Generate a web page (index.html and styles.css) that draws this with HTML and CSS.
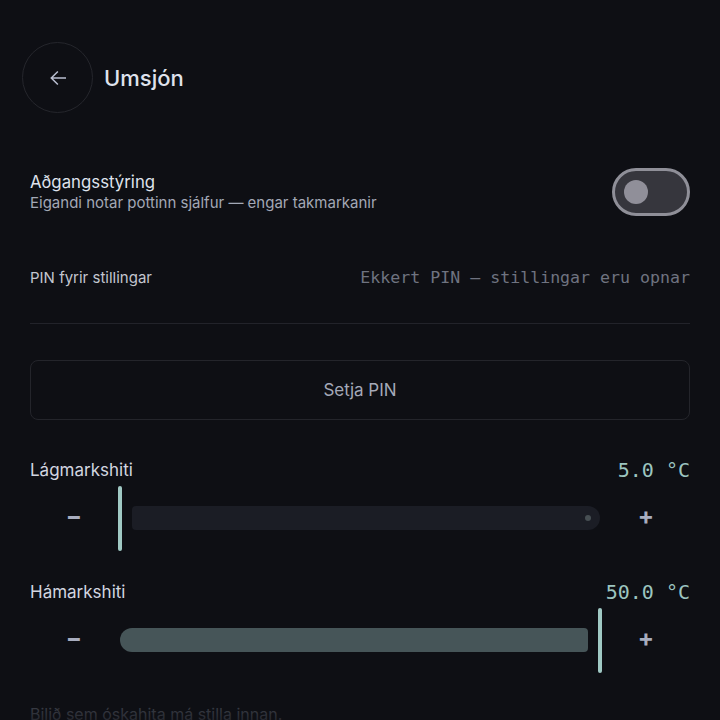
FILE: index.html
```html
<!DOCTYPE html>
<html lang="is">

<head>
  <meta charset="UTF-8">
  <meta name="viewport" content="width=device-width, initial-scale=1.0">
  <title>Umsjón</title>
  <link rel="stylesheet" href="styles.css">
</head>

<body>
  <header class="top-bar">
    <button type="button" class="back-btn" aria-label="Til baka">
      <svg viewBox="0 0 24 24" width="24" height="24">
        <path d="M20 11.25H7.1l5.3-5.3-1.06-1.06L4.2 12l7.14 7.11 1.06-1.06-5.3-5.3H20z" fill="currentColor" />
      </svg>
    </button>
    <h1 class="title">Umsjón</h1>
  </header>

  <main class="content">
    <div class="row toggle-row">
      <div class="row-text">
        <p class="row-title">Aðgangsstýring</p>
        <p class="row-sub">Eigandi notar pottinn sjálfur — engar takmarkanir</p>
      </div>
      <span class="switch"><span class="switch-thumb"></span></span>
    </div>

    <div class="row pin-row">
      <p class="pin-label">PIN fyrir stillingar</p>
      <p class="pin-value">Ekkert PIN — stillingar eru opnar</p>
    </div>

    <hr class="divider">

    <button type="button" class="outline-btn">Setja PIN</button>

    <section class="range">
      <div class="range-head">
        <p class="range-label">Lágmarkshiti</p>
        <p class="range-value">5.0 °C</p>
      </div>
      <div class="slider-row">
        <button type="button" class="step-btn">−</button>
        <div class="slider slider-min">
          <span class="handle"></span>
          <span class="track-off"><span class="stop"></span></span>
        </div>
        <button type="button" class="step-btn">+</button>
      </div>
    </section>

    <section class="range">
      <div class="range-head">
        <p class="range-label">Hámarkshiti</p>
        <p class="range-value">50.0 °C</p>
      </div>
      <div class="slider-row">
        <button type="button" class="step-btn">−</button>
        <div class="slider slider-max">
          <span class="track-on"></span>
          <span class="handle"></span>
        </div>
        <button type="button" class="step-btn">+</button>
      </div>
    </section>

    <p class="hint">Bilið sem óskahita má stilla innan.</p>
  </main>

  <div class="fade"></div>
</body>

</html>
```

FILE: styles.css
```css
* {
  margin: 0;
  padding: 0;
  box-sizing: border-box;

  font-family: Inter, "Noto Sans", sans-serif;
}

body {
  width: 720px;
  height: 720px;
  overflow: hidden;
  background-color: #0e0f14;
  color: #dfe2ec;
}

.top-bar {
  display: flex;
  align-items: center;
  gap: 11px;

  padding: 42px 0 0 22px;
}

.back-btn {
  display: flex;
  align-items: center;
  justify-content: center;

  width: 71px;
  height: 71px;
  border-radius: 50%;
  border: 1.5px solid #25262c;
  background: none;
  color: #b9bed0;
}

.title {
  font-size: 22px;
  font-weight: 500;
  color: #dfe2ec;
}

.content {
  padding: 0 30px;
}

.row {
  display: flex;
  align-items: center;
  justify-content: space-between;
}

.toggle-row {
  margin-top: 55px;
}

.row-title {
  font-size: 16.8px;
  line-height: 22px;
  color: #dfe2ec;
}

.row-sub {
  font-size: 15px;
  line-height: 20px;
  color: #a3a8b6;
}

.switch {
  display: flex;
  align-items: center;

  width: 78px;
  height: 48px;
  padding-left: 9px;
  border-radius: 24px;
  border: 3px solid #8f8f98;
  background-color: #36363d;
}

.switch-thumb {
  width: 24px;
  height: 24px;
  border-radius: 50%;
  background-color: #908f99;
}

.pin-row {
  margin-top: 49px;
  height: 24px;
}

.pin-label {
  font-size: 15px;
  color: #c3c6d0;
}

.pin-value {
  font-family: "DejaVu Sans Mono", monospace;
  font-size: 16.6px;
  color: #6f7380;
}

.divider {
  margin-top: 34px;
  border: none;
  border-top: 1px solid #22232a;
}

.outline-btn {
  display: block;
  width: 100%;
  height: 60px;
  margin-top: 36px;

  border: 1.5px solid #24252b;
  border-radius: 8px;
  background: none;

  font-size: 17px;
  color: #a4a9b8;
}

.range {
  margin-top: 38px;
}

.range + .range {
  margin-top: 29px;
}

.range-head {
  display: flex;
  align-items: center;
  justify-content: space-between;
  height: 24px;
}

.range-label {
  font-size: 17px;
  color: #d3d6e0;
}

.range-value {
  font-family: "DejaVu Sans Mono", monospace;
  font-size: 20px;
  color: #9cc5c0;
}

.slider-row {
  display: flex;
  align-items: center;
  height: 66px;
  margin-top: 3px;
}

.step-btn {
  width: 88px;
  height: 48px;
  padding-bottom: 5px;
  border: none;
  background: none;

  font-size: 24px;
  line-height: 24px;
  font-weight: 700;
  color: #a8adbf;
}

.slider {
  display: flex;
  align-items: center;
  gap: 10px;
  flex: 1;
  height: 66px;
}

.handle {
  width: 4px;
  height: 65px;
  border-radius: 2px;
  background-color: #a0c9c4;
}

.track-off {
  display: flex;
  align-items: center;
  justify-content: flex-end;
  flex: 1;
  height: 24px;
  margin-right: 2px;
  padding-right: 9px;

  border-radius: 4px 12px 12px 4px;
  background-color: #1b1d25;
}

.stop {
  width: 6px;
  height: 6px;
  border-radius: 50%;
  background-color: #474f53;
}

.slider-max {
  padding-left: 2px;
}

.track-on {
  flex: 1;
  height: 24px;
  border-radius: 12px 4px 4px 12px;
  background-color: #465558;
}

.hint {
  margin-top: 31px;
  font-size: 16px;
  color: #4c505b;
}

.fade {
  position: absolute;
  left: 0;
  bottom: 0;
  width: 720px;
  height: 28px;
  background: linear-gradient(rgba(14, 15, 20, 0), rgba(14, 15, 20, 0.6));
}
```
